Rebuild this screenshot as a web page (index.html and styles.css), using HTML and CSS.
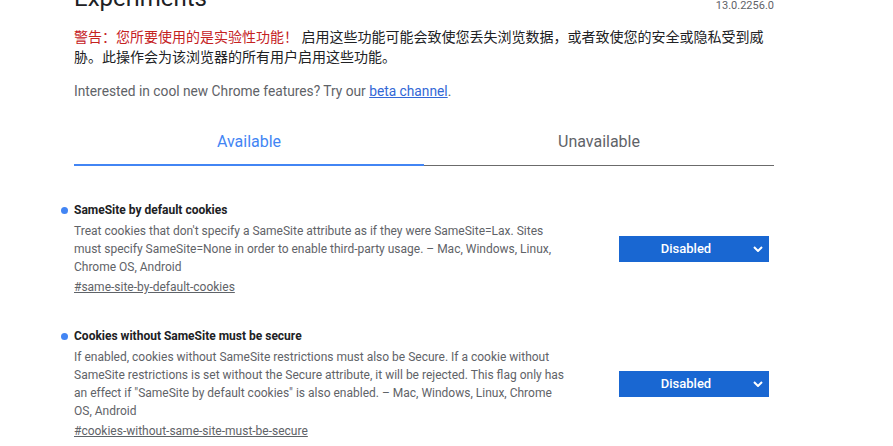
FILE: index.html
```html
<!DOCTYPE html>
<html lang="zh-CN">
<head>
    <meta charset="UTF-8">
    <title>Experiments</title>
    <link rel="stylesheet" href="styles.css">
</head>
<body>
    <div class="page">
        <div class="header">
            <h1>Experiments</h1>
            <span class="version">13.0.2256.0</span>
        </div>

        <p class="warning"><span class="warning-label">警告：您所要使用的是实验性功能！</span> 启用这些功能可能会致使您丢失浏览数据，或者致使您的安全或隐私受到威胁。此操作会为该浏览器的所有用户启用这些功能。</p>

        <p class="promo">Interested in cool new Chrome features? Try our <a href="#">beta channel</a>.</p>

        <div class="tabs">
            <div class="tab active">Available</div>
            <div class="tab">Unavailable</div>
        </div>

        <div class="experiment">
            <div class="experiment-text">
                <h3 class="experiment-name">SameSite by default cookies</h3>
                <p class="experiment-desc">Treat cookies that don't specify a SameSite attribute as if they were SameSite=Lax. Sites must specify SameSite=None in order to enable third-party usage. – Mac, Windows, Linux, Chrome OS, Android</p>
                <a class="permalink" href="#">#same-site-by-default-cookies</a>
            </div>
            <div class="select">
                <span class="select-value">Disabled</span>
                <svg class="chevron" width="10" height="6" viewBox="0 0 10 6"><path d="M1 1l4 4 4-4" fill="none" stroke="#fff" stroke-width="2"/></svg>
            </div>
        </div>

        <div class="experiment">
            <div class="experiment-text">
                <h3 class="experiment-name">Cookies without SameSite must be secure</h3>
                <p class="experiment-desc">If enabled, cookies without SameSite restrictions must also be Secure. If a cookie without SameSite restrictions is set without the Secure attribute, it will be rejected. This flag only has an effect if "SameSite by default cookies" is also enabled. – Mac, Windows, Linux, Chrome OS, Android</p>
                <a class="permalink" href="#">#cookies-without-same-site-must-be-secure</a>
            </div>
            <div class="select">
                <span class="select-value">Disabled</span>
                <svg class="chevron" width="10" height="6" viewBox="0 0 10 6"><path d="M1 1l4 4 4-4" fill="none" stroke="#fff" stroke-width="2"/></svg>
            </div>
        </div>
    </div>
</body>
</html>
```

FILE: styles.css
```css
* {
    box-sizing: border-box;
    margin: 0;
    padding: 0;
}

body {
    background-color: #fff;
    color: #202124;
    font-family: Roboto, 'Noto Sans CJK SC', sans-serif;
    font-size: 13px;
    overflow: hidden;
}

.page {
    width: 700px;
    margin-left: 74px;
}

.header {
    display: flex;
    justify-content: space-between;
    align-items: flex-start;
    margin-top: -16px;
    height: 43px;
}

h1 {
    font-size: 24px;
    font-weight: normal;
    line-height: 28px;
    color: #202124;
}

.version {
    color: #5f6368;
    font-size: 11px;
    line-height: 20px;
    margin-top: 12px;
}

.warning {
    font-size: 14px;
    line-height: 20px;
    color: #202124;
}

.warning-label {
    color: #c5221f;
}

.promo {
    margin-top: 14px;
    font-size: 13.75px;
    line-height: 20px;
    color: #5f6368;
}

.promo a {
    color: #3367d6;
}

.tabs {
    display: flex;
    align-items: flex-end;
    margin-top: 31px;
}

.tab {
    flex: 1;
    text-align: center;
    font-size: 16px;
    line-height: 20px;
    padding-bottom: 13px;
    color: #5f6368;
    border-bottom: 1px solid #6b6b6b;
}

.tab.active {
    color: #4285f4;
    padding-bottom: 12px;
    border-bottom: 2px solid #4285f4;
}

.experiment {
    display: flex;
    align-items: center;
    margin-top: 35px;
}

.experiment + .experiment {
    margin-top: 31px;
}

.experiment-text {
    width: 497px;
    font-size: 12px;
    line-height: 18px;
}

.experiment-name {
    position: relative;
    font-size: 12px;
    font-weight: bold;
    color: #202124;
}

.experiment-name::before {
    content: '';
    position: absolute;
    left: -13px;
    top: 6px;
    width: 7px;
    height: 7px;
    border-radius: 50%;
    background-color: #4285f4;
}

.experiment-desc {
    margin-top: 3px;
    color: #5f6368;
}

.permalink {
    display: inline-block;
    margin-top: 2px;
    color: #5f6368;
}

.select {
    display: flex;
    align-items: center;
    width: 150px;
    height: 26px;
    margin-left: 48px;
    background-color: #1967d2;
    color: #fff;
    font-weight: 500;
}

.select-value {
    flex: 1;
    text-align: center;
    padding-left: 10px;
}

.chevron {
    margin: 0 6px 0 10px;
}
```
